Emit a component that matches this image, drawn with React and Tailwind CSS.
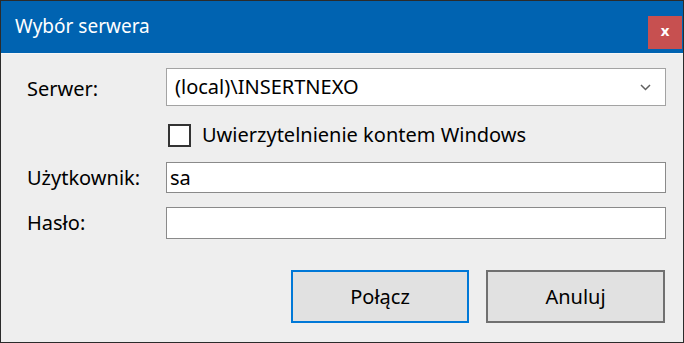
import React, { useState } from 'react';

const font = { fontFamily: '"Noto Sans", "Open Sans", sans-serif' };

const App = () => {
  const [server] = useState('(local)\\INSERTNEXO');
  const [user, setUser] = useState('sa');
  const [pass, setPass] = useState('');
  const [useWindows, setUseWindows] = useState(false);

  return (
    <div
      className="w-[684px] h-[343px] border border-[#2b2b2b] bg-[#eeeeee] flex flex-col text-black"
      style={font}
    >
      {/* title bar */}
      <div className="h-[52px] bg-[#0063b1] flex items-center justify-between pl-[14px] pr-[1px] shrink-0">
        <span className="text-white text-[19px] mt-[-1px]">Wybór serwera</span>
        <button className="w-[34px] h-[33px] mt-[10px] bg-[#c75050] flex items-center justify-center text-white text-[15px] font-bold leading-none pb-[3px]">
          x
        </button>
      </div>
      <div className="h-[1px] bg-[#f6f6f6]" />

      {/* form */}
      <div className="flex flex-col pl-[26px] pr-[17px] pt-[14px] text-[20px] leading-[26px]">
        <div className="flex items-center">
          <span className="w-[139px] mt-[4px]">Serwer:</span>
          <div className="flex-1 h-[38px] bg-white border border-[#a3a3a3] flex items-center justify-between pl-[8px] pr-[14px]">
            <span>{server}</span>
            <svg width="11" height="7" viewBox="0 0 11 7" fill="none">
              <path d="M1 1l4.5 4.5L10 1" stroke="#606060" strokeWidth="1.5" />
            </svg>
          </div>
        </div>

        <label className="flex items-center ml-[141px] mt-[16px]">
          <span
            onClick={() => setUseWindows(!useWindows)}
            className="w-[23px] h-[23px] border-2 border-[#333333] bg-white flex items-center justify-center"
          >
            {useWindows && (
              <svg width="14" height="11" viewBox="0 0 14 11" fill="none">
                <path d="M1 5.5l4 4L13 1" stroke="#000" strokeWidth="1.6" />
              </svg>
            )}
          </span>
          <span className="ml-[11px]">Uwierzytelnienie kontem Windows</span>
        </label>

        <div className="flex items-center mt-[14px]">
          <span className="w-[139px]">Użytkownik:</span>
          <input
            value={user}
            onChange={(e) => setUser(e.target.value)}
            className="flex-1 h-[31px] bg-white border border-[#8a8a8a] px-[3px] outline-none"
          />
        </div>

        <div className="flex items-center mt-[14px]">
          <span className="w-[139px]">Hasło:</span>
          <input
            type="password"
            value={pass}
            onChange={(e) => setPass(e.target.value)}
            className="flex-1 h-[32px] bg-white border border-[#8a8a8a] px-[3px] outline-none"
          />
        </div>

        <div className="flex justify-end gap-[17px] mt-[31px] pr-[1px]">
          <button className="w-[178px] h-[53px] bg-[#e1e1e1] border-2 border-[#0078d7]">
            Połącz
          </button>
          <button className="w-[179px] h-[53px] bg-[#e1e1e1] border-2 border-[#707070]">
            Anuluj
          </button>
        </div>
      </div>
    </div>
  );
};

export default App;
